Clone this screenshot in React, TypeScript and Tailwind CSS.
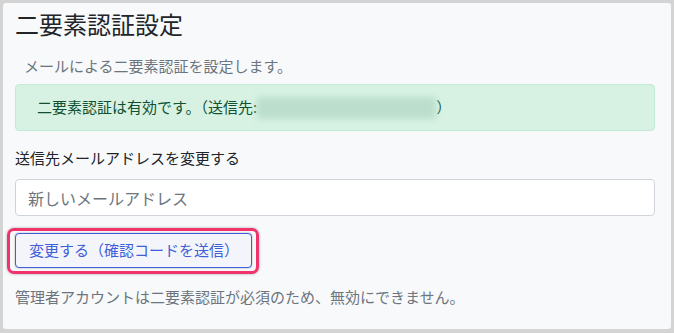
import React from "react";

const font = { fontFamily: '"Noto Sans CJK JP", "Noto Sans", sans-serif' };

export default function App() {
  return (
    <div
      className="w-[674px] h-[333px] bg-[#d4d4d4] pl-[3px] pt-[3px] pr-[3px] pb-[4px]"
      style={font}
    >
      <div className="h-full bg-[#f8f9fb] rounded-[3px] pl-[12px] pr-[16px] pt-[6px] flex flex-col">
        <h1 className="text-[24px] leading-[29px] h-[29px] text-[#212529] font-normal">
          二要素認証設定
        </h1>
        <p className="mt-[17px] ml-[9px] text-[15px] leading-[21px] text-[#6c757d]">
          メールによる二要素認証を設定します。
        </p>
        <div className="mt-[8px] h-[47px] rounded-[4px] border border-[#c3ead6] bg-[#d7f2e3] pl-[21px] flex items-center text-[15px] text-[#0f5132]">
          <span>二要素認証は有効です。（送信先:</span>
          <span className="inline-block w-[179px] h-[22px] bg-[#bcdecd] blur-[3px]" />
          <span>）</span>
        </div>
        <label className="mt-[16px] text-[15px] leading-[22px] text-[#212529]">
          送信先メールアドレスを変更する
        </label>
        <div className="mt-[10px] h-[37px] rounded-[4px] border border-[#ced4da] bg-white pl-[12px] flex items-center text-[16px] text-[#6c757d]">
          新しいメールアドレス
        </div>
        <div className="mt-[12px] -ml-[8px] self-start rounded-[7px] border-[3px] border-[#f0336b] pl-[5px] pt-[2px] pr-[4px] pb-[3px] shadow-[0_0_3px_rgba(0,0,0,0.3)]">
          <button
            className="h-[35px] pl-[13px] pr-[12px] rounded-[4px] border border-[#3f5fd8] bg-[#f3f5fb] text-[15px] text-[#3f5fd8] shadow-[0_0_2px_rgba(0,0,0,0.35)]"
            style={font}
          >
            変更する（確認コードを送信）
          </button>
        </div>
        <p className="mt-[12px] text-[15px] leading-[22px] text-[#6c757d]">
          管理者アカウントは二要素認証が必須のため、無効にできません。
        </p>
      </div>
    </div>
  );
}
